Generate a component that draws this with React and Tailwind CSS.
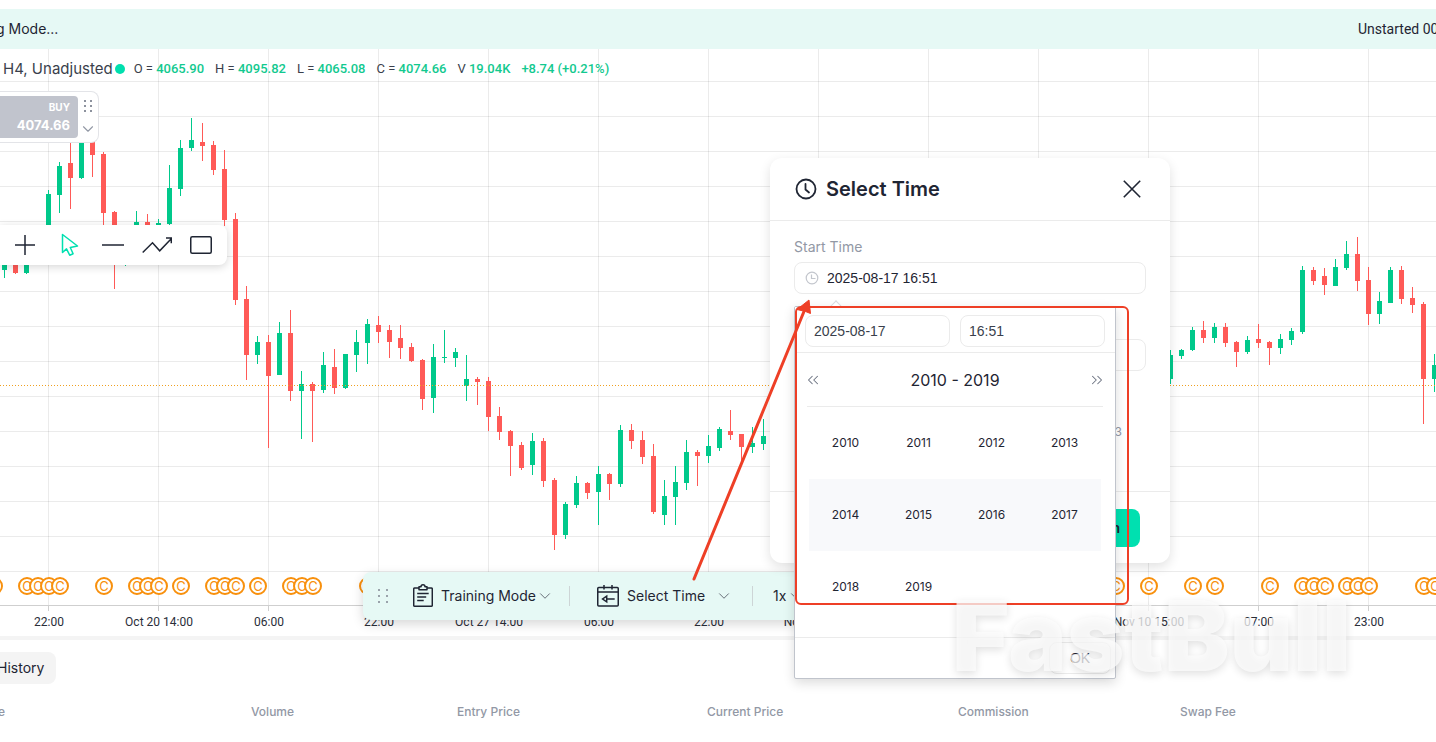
import { useState } from "react";
import { ChevronDown, ChevronsLeft, ChevronsRight } from "lucide-react";

const UP = "#00c98b";
const DOWN = "#ff5a57";
const COIN = "#f8900d";

// [index, high, body top, body bottom, low, direction]
const CANDLES = [
	[0, 240, 250, 270, 278, 1],
	[1, 240, 250, 273, 274, 0],
	[2, 240, 250, 273, 274, 1],
	[4, 190, 194, 240, 245, 1],
	[5, 162, 166, 195, 213, 1],
	[6, 130, 163, 178, 209, 0],
	[7, 120, 130, 178, 179, 1],
	[8, 120, 130, 155, 177, 0],
	[9, 152, 154, 213, 225, 0],
	[10, 211, 212, 240, 289, 0],
	[11, 235, 240, 250, 266, 1],
	[12, 211, 222, 240, 245, 1],
	[13, 214, 222, 240, 245, 0],
	[14, 219, 223, 240, 245, 1],
	[15, 165, 188, 224, 225, 1],
	[16, 140, 148, 189, 196, 1],
	[17, 118, 140, 148, 151, 1],
	[18, 123, 142, 146, 161, 0],
	[19, 141, 145, 170, 175, 0],
	[20, 150, 169, 220, 226, 0],
	[21, 213, 219, 300, 305, 0],
	[22, 286, 299, 355, 380, 0],
	[23, 336, 342, 355, 364, 1],
	[24, 335, 342, 376, 448, 0],
	[25, 322, 333, 375, 375, 1],
	[26, 310, 333, 391, 401, 0],
	[27, 371, 384, 391, 439, 1],
	[28, 382, 384, 391, 442, 0],
	[29, 352, 365, 390, 393, 1],
	[30, 349, 367, 388, 394, 0],
	[31, 354, 354, 388, 389, 1],
	[32, 330, 342, 355, 372, 1],
	[33, 319, 324, 343, 364, 1],
	[34, 316, 325, 332, 343, 0],
	[35, 325, 330, 342, 358, 0],
	[36, 325, 338, 348, 359, 0],
	[37, 343, 347, 361, 362, 0],
	[38, 359, 360, 399, 410, 0],
	[39, 344, 357, 398, 413, 1],
	[40, 330, 357, 358, 363, 1],
	[41, 348, 352, 358, 367, 1],
	[42, 355, 379, 386, 401, 1],
	[43, 377, 379, 382, 405, 0],
	[44, 377, 381, 417, 431, 0],
	[45, 407, 416, 432, 440, 0],
	[46, 430, 431, 446, 476, 0],
	[47, 442, 445, 468, 470, 0],
	[48, 433, 441, 465, 475, 1],
	[49, 438, 441, 481, 487, 0],
	[50, 478, 480, 535, 550, 0],
	[51, 502, 504, 535, 539, 1],
	[52, 476, 483, 505, 508, 1],
	[53, 482, 483, 493, 499, 0],
	[54, 466, 474, 492, 525, 1],
	[55, 473, 474, 484, 500, 0],
	[56, 425, 430, 484, 487, 1],
	[57, 424, 430, 441, 449, 0],
	[58, 431, 440, 457, 464, 0],
	[59, 444, 456, 512, 514, 0],
	[60, 480, 496, 515, 525, 1],
	[61, 466, 482, 497, 525, 1],
	[62, 440, 452, 483, 490, 1],
	[63, 450, 452, 456, 486, 0],
	[64, 435, 446, 456, 463, 1],
	[65, 427, 429, 448, 451, 1],
	[66, 410, 431, 435, 440, 0],
	[67, 434, 434, 447, 461, 0],
	[68, 427, 443, 447, 453, 1],
	[69, 419, 436, 444, 450, 1],
	[106, 350, 355, 379, 384, 1],
	[107, 349, 350, 356, 359, 1],
	[108, 327, 330, 350, 351, 1],
	[109, 321, 330, 338, 343, 0],
	[110, 323, 327, 338, 343, 1],
	[111, 323, 327, 343, 347, 0],
	[112, 341, 342, 352, 367, 0],
	[113, 336, 340, 352, 354, 1],
	[114, 324, 339, 343, 348, 0],
	[115, 341, 342, 348, 365, 0],
	[116, 334, 339, 348, 354, 1],
	[117, 328, 331, 340, 345, 1],
	[118, 266, 270, 332, 334, 1],
	[119, 267, 270, 281, 285, 0],
	[120, 268, 276, 285, 295, 0],
	[121, 259, 267, 286, 286, 1],
	[122, 241, 254, 268, 270, 1],
	[123, 237, 254, 281, 291, 0],
	[124, 267, 280, 314, 325, 0],
	[125, 292, 301, 314, 324, 1],
	[126, 267, 270, 303, 303, 1],
	[127, 266, 270, 299, 304, 0],
	[128, 287, 298, 305, 313, 0],
	[129, 302, 304, 379, 424, 0],
	[130, 354, 365, 379, 392, 1],
];

const COINS = [
	-6, 27, 38, 49, 60, 104, 137, 148, 159, 181, 214, 225, 236, 258, 291, 302, 313, 368, 1116, 1149,
	1193, 1215, 1270, 1303, 1314, 1325, 1347, 1358, 1369, 1424, 1435,
];

const AXIS = [
	[48, "22:00"],
	[158, "Oct 20 14:00"],
	[268, "06:00"],
	[378, "22:00"],
	[488, "Oct 27 14:00"],
	[598, "06:00"],
	[708, "22:00"],
	[818, "Nov 03 15:00"],
	[1148, "Nov 10 15:00"],
	[1258, "07:00"],
	[1368, "23:00"],
];

const QUOTES = [
	["O = ", "4065.90"],
	["H = ", "4095.82"],
	["L = ", "4065.08"],
	["C = ", "4074.66"],
	["V ", "19.04K"],
	["", "+8.74 (+0.21%)"],
];

const YEARS = [2010, 2011, 2012, 2013, 2014, 2015, 2016, 2017, 2018, 2019];

function Chart() {
	const columns = Array.from({ length: 13 }, (_, i) => 48 + i * 110);
	const rows = Array.from({ length: 15 }, (_, i) => 81 + i * 35);

	return (
		<svg className="absolute inset-0 w-full h-full" aria-label="Price chart">
			<g transform="translate(0 -49)" shapeRendering="crispEdges">
				{rows.map((y) => (
					<rect key={y} x="0" y={y} width="100%" height="1" fill="#000" opacity="0.08" />
				))}
				{columns.map((x) => (
					<g key={x}>
						<rect x={x} y="49" width="1" height="556" fill="#000" opacity="0.08" />
						<rect x={x} y="605" width="1" height="6" fill="#cfcfcf" />
					</g>
				))}
				<rect x="0" y="605" width="100%" height="1" fill="#cfcfcf" />
				{CANDLES.map(([i, high, top, bottom, low, up]) => (
					<g key={i} fill={up ? UP : DOWN}>
						<rect x={4 + i * 11} y={high} width="1" height={low - high} />
						<rect x={2 + i * 11} y={top} width="5" height={bottom - top} />
					</g>
				))}
				<line x1="0" x2="100%" y1="385.5" y2="385.5" stroke="#f0a020" strokeDasharray="1 2" />
			</g>
			<g transform="translate(0 -49)">
				{/* Rings stack left to right, the letters stay on top of all of them */}
				{COINS.map((x) => (
					<circle key={x} cx={x} cy="586" r="8" fill="#fff" stroke={COIN} strokeWidth="2" />
				))}
				{COINS.map((x) => (
					<text
						key={x}
						x={x}
						y="591"
						textAnchor="middle"
						fill={COIN}
						className="font-['Inter',sans-serif] text-[13px]">
						C
					</text>
				))}
				{AXIS.map(([x, label]) => (
					<text
						key={x}
						x={x + 1}
						y="626"
						textAnchor="middle"
						fill="#2a2e39"
						className="font-['Roboto',sans-serif] text-xs">
						{label}
					</text>
				))}
			</g>
		</svg>
	);
}

function Grip() {
	return (
		<svg width="12" height="16" viewBox="0 0 12 16" fill="#9aa3ab">
			{[1, 7, 13].map((y) => (
				<g key={y}>
					<rect x="1" y={y} width="2" height="2" />
					<rect x="9" y={y} width="2" height="2" />
				</g>
			))}
		</svg>
	);
}

function SmallGrip() {
	return (
		<svg width="8" height="12" viewBox="0 0 8 12" fill="#8d929e">
			{[0, 5, 10].map((y) => (
				<g key={y}>
					<rect x="0" y={y} width="2" height="2" />
					<rect x="6" y={y} width="2" height="2" />
				</g>
			))}
		</svg>
	);
}

function DrawingTools() {
	const button = "w-[30px] h-10 flex items-center justify-center";
	return (
		<div className="absolute top-[176px] left-0 h-10 w-[227px] pl-[10px] flex gap-[14px] bg-white rounded-r-lg shadow-[0_2px_8px_rgba(0,0,0,0.16)]">
			<button aria-label="Crosshair" className={button}>
				<svg width="20" height="20" viewBox="0 0 20 20" stroke="#1f2533" strokeWidth="1.5">
					<path d="M10 0v20M0 10h20" />
				</svg>
			</button>
			<button aria-label="Cursor" className={button}>
				<svg
					width="22"
					height="24"
					viewBox="-3 0 22 24"
					fill="none"
					stroke="#00e0b0"
					strokeWidth="1.5"
					strokeLinejoin="round">
					<path d="M1.5 1.5v18l4-3.6 3.2 6.3 3.4-1.5-2.8-6.2 7.2-1.5z" />
				</svg>
			</button>
			<button aria-label="Horizontal line" className={button}>
				<svg width="22" height="4" viewBox="0 0 22 4" stroke="#1f2533" strokeWidth="1.5">
					<path d="M0 2h22" />
				</svg>
			</button>
			<button aria-label="Trend line" className={button}>
				<svg
					width="30"
					height="18"
					viewBox="0 0 30 18"
					fill="none"
					stroke="#1f2533"
					strokeWidth="1.5">
					<path d="M.7 16.5l9.8-9.7 7.2 8L29 3M24 2h5.3v5.3" />
				</svg>
			</button>
			<button aria-label="Rectangle" className={button}>
				<svg width="22" height="18" viewBox="0 0 22 18" fill="none" stroke="#1f2533" strokeWidth="1.5">
					<rect x=".75" y=".75" width="20.5" height="16.5" rx="1.5" />
				</svg>
			</button>
		</div>
	);
}

function ReplayBar() {
	const chevron = "w-[18px] h-[18px] text-[#5a616b]";
	return (
		<div className="absolute top-[572px] left-[363px] h-12 w-[640px] pl-[14px] flex items-center bg-[#e6f9f5] rounded-lg shadow-[0_4px_12px_rgba(0,0,0,0.16)] text-sm text-[#1f2533]">
			<Grip />
			<button className="ml-6 flex items-center">
				<svg
					width="20"
					height="24"
					viewBox="0 0 20 24"
					fill="none"
					stroke="#1f2533"
					strokeWidth="1.5"
					strokeLinejoin="round">
					<path d="M6 4H1.7c-.6 0-1 .4-1 1v16.2c0 .6.4 1 1 1h16.6c.6 0 1-.4 1-1V5c0-.6-.4-1-1-1H14" />
					<path d="M6 2.8h2a2 2 0 0 1 4 0h2v3H6z" />
					<path d="M4.2 9.5h11.5M4.2 13h9M4.2 16.5h6.5" />
				</svg>
				<span className="ml-2">Training Mode</span>
				<ChevronDown className={chevron} strokeWidth={1.2} />
			</button>
			<span className="ml-[15px] w-px h-5 bg-[#cdd5d6]" />
			<button className="ml-[27px] flex items-center">
				<svg width="22" height="22" viewBox="0 0 22 22" fill="none" stroke="#1f2533" strokeWidth="1.5">
					<rect x=".75" y="2.5" width="20.5" height="18.5" rx="1" />
					<path d="M1 7h20M7 0v4.5M15 0v4.5" />
					<path d="M9.7 11.2L5.6 14l4.1 2.8zM9.7 14h8" />
				</svg>
				<span className="ml-2 mr-[10px]">Select Time</span>
				<ChevronDown className={chevron} strokeWidth={1.2} />
			</button>
			<span className="ml-[19px] w-px h-5 bg-[#cdd5d6]" />
			<button className="ml-5 flex items-center">
				<span className="mr-px">1x</span>
				<ChevronDown className={chevron} strokeWidth={1.2} />
			</button>
		</div>
	);
}

function TimeDialog() {
	const [start, setStart] = useState("2025-08-17 16:51");
	const [end, setEnd] = useState("");
	return (
		<div
			role="dialog"
			aria-labelledby="dialog-title"
			className="absolute top-[158px] left-[770px] w-[400px] h-[405px] flex flex-col bg-white rounded-xl shadow-[0_4px_12px_rgba(0,0,0,0.12)]">
			<div className="h-[63px] px-6 flex items-center border-b border-[#ebebeb]">
				<svg
					width="24"
					height="24"
					viewBox="0 0 24 24"
					fill="none"
					stroke="#1f2533"
					strokeWidth="1.8"
					strokeLinecap="round">
					<circle cx="12" cy="12" r="9.5" />
					<path d="M11.5 7v5.5l3.5 3" />
				</svg>
				<h2 id="dialog-title" className="ml-2 text-xl font-semibold text-[#1f2533]">
					Select Time
				</h2>
				<button aria-label="Close" className="ml-auto w-7 h-7 flex items-center justify-center">
					<svg width="18" height="18" viewBox="0 0 18 18" stroke="#1f2533" strokeWidth="1.6">
						<path d="M.8.8l16.4 16.4M17.2.8L.8 17.2" />
					</svg>
				</button>
			</div>
			<div className="flex-1 px-6 pt-4">
				<label htmlFor="start-time" className="block h-[25px] text-sm leading-5 text-[#9298a5]">
					Start Time
				</label>
				<div className="h-8 px-[10px] flex items-center border border-[#ebebeb] rounded-lg">
					<svg width="14" height="14" viewBox="0 0 14 14" fill="none" stroke="#c3c6cd" strokeWidth="1.2">
						<circle cx="7" cy="7" r="5.8" />
						<path d="M6.5 3.5v4h4" />
					</svg>
					<input
						id="start-time"
						value={start}
						onChange={(e) => setStart(e.target.value)}
						className="ml-2 flex-1 min-w-0 font-['Liberation_Sans',sans-serif] text-sm text-[#1f2533] outline-none"
					/>
				</div>
				<label htmlFor="end-time" className="mt-5 block h-[25px] text-sm leading-5 text-[#9298a5]">
					End Time
				</label>
				<input
					id="end-time"
					value={end}
					onChange={(e) => setEnd(e.target.value)}
					className="block w-full h-8 px-8 border border-[#ebebeb] rounded-lg text-sm outline-none"
				/>
				<p className="mt-[53px] pr-6 text-right text-xs text-[#9298a5]">3</p>
			</div>
			<div className="h-[72px] pr-[30px] flex items-center justify-end border-t border-[#ebebeb]">
				<button className="h-[38px] px-5 rounded-lg bg-[#00e0b0] text-sm font-semibold text-[#1f2533]">
					Confirm
				</button>
			</div>
		</div>
	);
}

function YearPicker() {
	const [date, setDate] = useState("2025-08-17");
	const [time, setTime] = useState("16:51");
	const field =
		"w-full min-w-0 h-8 px-2 border border-[#ebebeb] rounded-lg font-['Liberation_Sans',sans-serif] text-sm text-[#3a3f4c] outline-none";
	return (
		<div className="absolute top-[306px] left-[794px] w-[322px] bg-white border border-[#c0c4cc] rounded-xs shadow-[0_4px_12px_rgba(0,0,0,0.14)]">
			<span className="absolute -top-[5px] left-[37px] w-2 h-2 rotate-45 border-t border-l border-[#d8dade] bg-white" />
			<div className="relative px-[10px] pt-2 pb-[5px] flex gap-[10px] bg-white border-b border-[#ebebeb]">
				<input
					aria-label="Date"
					value={date}
					onChange={(e) => setDate(e.target.value)}
					className={field}
				/>
				<input
					aria-label="Time"
					value={time}
					onChange={(e) => setTime(e.target.value)}
					className={field}
				/>
			</div>
			<div className="mx-3 h-[54px] flex items-center justify-between border-b border-[#ebebeb]">
				<button aria-label="Previous decade" className="-ml-[3px]">
					<ChevronsLeft className="w-[18px] h-[18px] text-[#6b7280]" strokeWidth={1.4} />
				</button>
				<span className="text-base text-[#1f2533]">2010 - 2019</span>
				<button aria-label="Next decade" className="-mr-[3px]">
					<ChevronsRight className="w-[18px] h-[18px] text-[#6b7280]" strokeWidth={1.4} />
				</button>
			</div>
			<div className="mx-[14px] pb-[14px] grid grid-cols-4">
				{YEARS.map((year, i) => (
					<button
						key={year}
						className={
							i >= 4 && i < 8 ?
								"h-[72px] text-xs text-[#1f2533] bg-[#f8f9fb]"
							:	"h-[72px] text-xs text-[#1f2533]"
						}>
						{year}
					</button>
				))}
			</div>
			<div className="h-[41px] px-1 flex items-center justify-end border-t border-[#ebebeb]">
				<button className="w-[62px] h-8 border border-[#ebebeb] rounded-lg font-['Liberation_Sans',sans-serif] text-sm text-[#1f2533]">
					OK
				</button>
			</div>
		</div>
	);
}

function Callout() {
	return (
		<>
			<div className="absolute top-[306px] left-[795px] w-[334px] h-[299px] border-2 border-[#ee3f26] rounded-md pointer-events-none" />
			<svg
				className="absolute top-[298px] left-[690px] pointer-events-none"
				width="126"
				height="284"
				viewBox="0 0 126 284">
				<path d="M4 281L115 11" stroke="#ee3f26" strokeWidth="3" strokeLinecap="round" />
				<path d="M119 2l1.5 13.5-5-2-8.5-2z" fill="#ee3f26" stroke="#ee3f26" />
			</svg>
		</>
	);
}

export default function App() {
	return (
		<div className="relative min-h-screen overflow-hidden bg-white font-['Inter',sans-serif] text-[#1f2533]">
			<header className="mt-[9px] h-10 flex items-center justify-between bg-[#e6f9f5] text-sm">
				<span className="-ml-1">g Mode...</span>
				<span className="w-[78px] overflow-hidden whitespace-nowrap font-['Roboto',sans-serif]">
					Unstarted 00
				</span>
			</header>

			<section className="relative h-[591px] border-b-4 border-[#f4f4f4]">
				<Chart />
				<div className="relative pt-[10px] pl-[3px] flex items-center text-[13px] leading-5 whitespace-pre">
					<span className="text-[15px] leading-5 text-[#3a3f4c]">H4, Unadjusted</span>
					<span className="ml-[2px] mr-[9px] w-[10px] h-[10px] rounded-full bg-[#00dfae]" />
					<div className="flex gap-[11px] font-['Roboto',sans-serif] text-[#3a3f4c]">
						{QUOTES.map(([label, value]) => (
							<span key={value}>
								{label}
								<span className="font-medium text-[#12c98f]">{value}</span>
							</span>
						))}
					</div>
				</div>

				{/* Quick order card */}
				<div className="absolute top-[42px] left-0 w-[99px] h-[52px] flex items-center bg-white border border-l-0 border-[#e3e4e8] rounded-r-lg">
					<button className="w-[78px] h-[42px] pr-2 flex flex-col justify-center items-end bg-[#c1c4cd] rounded-r-sm text-white">
						<span className="text-[10px] leading-4 font-bold">BUY</span>
						<span className="text-[13px] leading-5 font-bold">4074.66</span>
					</button>
					<div className="flex-1 h-[42px] pt-1 flex flex-col items-center justify-between">
						<SmallGrip />
						<ChevronDown className="w-[18px] h-[18px] text-[#9298a5]" strokeWidth={1.5} />
					</div>
				</div>
				<DrawingTools />
			</section>

			<nav className="pt-3 flex">
				<button className="h-8 pr-3 -ml-[3px] bg-[#f4f4f4] rounded-r-lg text-sm">History</button>
			</nav>
			<table className="mt-[18px] w-full table-fixed text-left text-xs text-[#9298a5]">
				<thead>
					<tr className="h-5">
						<th className="w-[251px] font-medium">
							<span className="-ml-[2px]">e</span>
						</th>
						<th className="w-[206px] font-medium">Volume</th>
						<th className="w-[250px] font-medium">Entry Price</th>
						<th className="w-[251px] font-medium">Current Price</th>
						<th className="w-[222px] font-medium">Commission</th>
						<th className="font-medium">Swap Fee</th>
					</tr>
				</thead>
			</table>

			<ReplayBar />
			<TimeDialog />
			<YearPicker />
			<Callout />
			<div className="absolute top-[578px] left-[952px] text-[98px] leading-[116px] font-black text-[#fcfcfc]/75 [text-shadow:0_3px_8px_rgba(0,0,0,0.12)] pointer-events-none select-none">
				FastBull
			</div>
		</div>
	);
}
